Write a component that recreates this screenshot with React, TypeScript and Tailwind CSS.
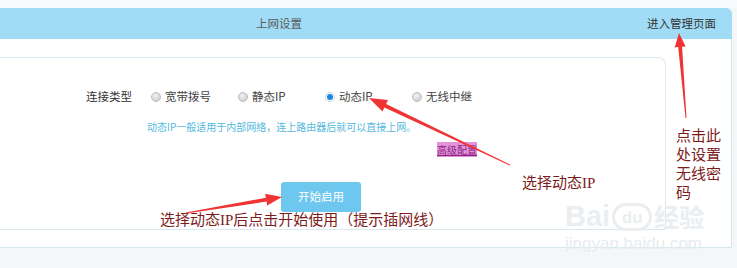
import React from "react";

type Pt = [number, number];

function arrowPoints(tail: Pt, tip: Pt, tailW: number, neckW: number, headLen: number, headW: number): string {
  const dx = tip[0] - tail[0];
  const dy = tip[1] - tail[1];
  const len = Math.hypot(dx, dy);
  const ux = dx / len;
  const uy = dy / len;
  const nx = -uy;
  const ny = ux;
  const neck: Pt = [tip[0] - ux * headLen, tip[1] - uy * headLen];
  const p = (b: Pt, k: number): string => `${(b[0] + nx * k).toFixed(1)},${(b[1] + ny * k).toFixed(1)}`;
  return [
    p(tail, tailW / 2),
    p(neck, neckW / 2),
    p(neck, headW / 2),
    `${tip[0]},${tip[1]}`,
    p(neck, -headW / 2),
    p(neck, -neckW / 2),
    p(tail, -tailW / 2),
  ].join(" ");
}

function Radio({ label, checked }: { label: string; checked?: boolean }) {
  return (
    <div className="flex w-[87px] items-center gap-[4px]">
      {checked ? (
        <span className="flex h-[10px] w-[10px] items-center justify-center rounded-full border border-[#c9d9e6] bg-white">
          <span className="h-[6px] w-[6px] rounded-full bg-[#1b86e0]" />
        </span>
      ) : (
        <span className="h-[10px] w-[10px] rounded-full border border-[#bdbdbd] bg-[radial-gradient(circle_at_40%_35%,#f2f2f2,#c4c4c4)]" />
      )}
      <span className="text-[#444]">{label}</span>
    </div>
  );
}

export default function App() {
  const cjk = { fontFamily: '"Noto Sans CJK SC", "Noto Sans", sans-serif' };
  const anno = { fontFamily: '"Liberation Serif", "Noto Sans CJK SC", serif' };
  return (
    <div className="relative h-[268px] w-[737px] overflow-hidden bg-[#f4f6f8]" style={cjk}>
      <div className="h-[8px] bg-[#f9fafb]" />
      <div className="mr-[5px]">
        <header className="flex h-[31px] items-center rounded-tr-[6px] bg-[#a0dcf6] text-[11.5px] leading-none">
          <div className="pl-[256px] text-[#5a5a5a]">上网设置</div>
          <div className="ml-auto pr-[16px] text-[#333]">进入管理页面</div>
        </header>
        <div className="h-[209px] border-b border-r border-[#d5e8f0] bg-white pt-[18px]">
          <div className="mr-[65px] h-[173px] rounded-tr-[8px] border-b border-r border-t border-[#dbe9f0] pt-[31px]">
            <div className="flex h-[16px] items-center text-[11.5px]">
              <div className="w-[151px] pl-[86px] text-[#333]">连接类型</div>
              <Radio label="宽带拨号" />
              <Radio label="静态IP" />
              <Radio label="动态IP" checked />
              <Radio label="无线中继" />
            </div>
            <div className="mt-[15px] h-[14px] pl-[147px] text-[10px] leading-[14px] text-[#54b9de]">
              动态IP一般适用于内部网络，连上路由器后就可以直接上网。
            </div>
            <div className="mt-[9px] h-[14px] pl-[437px] text-[10px] leading-[14px]">
              <span className="bg-[#e394d8] text-[#8e2385] underline">高级配置</span>
            </div>
            <div className="mt-[25px] pl-[281px]">
              <button className="h-[30px] w-[80px] rounded-[3px] bg-[#6ec7ef] text-[11.5px] text-white">
                开始启用
              </button>
            </div>
          </div>
        </div>
      </div>

      {/* watermark */}
      <div className="pointer-events-none absolute left-[565px] top-[202px] flex items-end text-[#eaeef0]" style={{ fontFamily: '"Liberation Sans", "Noto Sans CJK SC", sans-serif' }}>
        <span className="text-[29px] font-bold leading-none">Bai</span>
        <span className="mx-[2px] flex h-[28px] w-[40px] items-center justify-center rounded-full border-[3px] border-[#eaeef0] text-[17px] font-bold leading-none">du</span>
        <span className="text-[25px] font-bold leading-none">经验</span>
      </div>
      <div className="pointer-events-none absolute left-[565px] top-[235px] text-[17px] leading-none text-[#e8ecee]" style={{ fontFamily: '"Liberation Sans", sans-serif' }}>
        jingyan.baidu.com
      </div>

      {/* annotations */}
      <div className="absolute left-[160px] top-[210px] text-[15px] leading-[20px] text-[#7c1b1b]" style={anno}>
        选择动态IP后点击开始使用（提示插网线）
      </div>
      <div className="absolute left-[522px] top-[173px] text-[15px] leading-[20px] text-[#7c1b1b]" style={anno}>
        选择动态IP
      </div>
      <div className="absolute left-[676px] top-[127px] flex flex-col text-[15px] leading-[19px] text-[#7c1b1b]" style={anno}>
        <span>点击此</span>
        <span>处设置</span>
        <span>无线密</span>
        <span>码</span>
      </div>

      <svg className="pointer-events-none absolute left-0 top-0" width="737" height="268" viewBox="0 0 737 268">
        <polygon points={arrowPoints([686, 118], [679, 33], 1, 4, 14, 11)} fill="#f03434" />
        <polygon points={arrowPoints([510, 165], [369, 98], 1, 4, 18, 13)} fill="#f03434" />
        <polygon points={arrowPoints([186, 213], [282, 197], 1, 4, 16, 12)} fill="#f03434" />
      </svg>
    </div>
  );
}
